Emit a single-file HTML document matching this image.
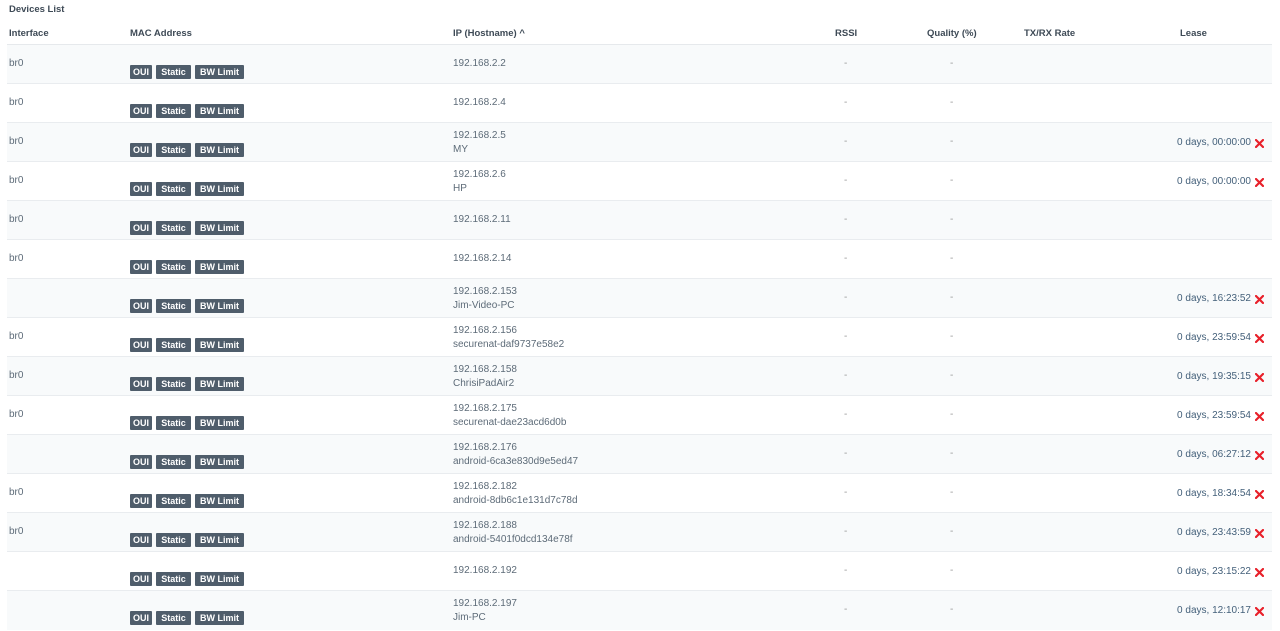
<!DOCTYPE html>
<html><head><meta charset="utf-8"><style>
*{margin:0;padding:0;box-sizing:border-box}
body{width:1280px;height:631px;background:#fff;font-family:"Liberation Sans",sans-serif;color:#5d6b78;font-size:10px;position:relative;overflow:hidden}
.t{position:absolute;left:9px;top:4px;font-size:9.5px;font-weight:bold;color:#3e4a56}
.h{position:absolute;top:24px;left:7px;width:1265px;height:21px;border-bottom:1px solid #e6e9ec;font-weight:bold;color:#3e4a56;font-size:9.5px}
.h span{position:absolute;top:4px}
.r{position:absolute;left:7px;width:1265px;height:39px;border-bottom:1px solid #e9ecef}
.r.o{background:#f8fafb}
.r .i{position:absolute;left:2px;top:13px}
.b{position:absolute;top:20px;height:14px;background:#4f5d6b;color:#fff;font-weight:bold;font-size:9px;line-height:14px;text-align:center;border-radius:1px}
.ip{position:absolute;left:446px;top:13px}
.ip2{position:absolute;left:446px;top:6px;line-height:14px}
.d1{position:absolute;left:837px;top:13px;color:#999}
.d2{position:absolute;left:943px;top:13px;color:#999}
.l{position:absolute;right:21px;top:14px;color:#44607a}
.x{position:absolute;right:8px;top:16px;width:9px;height:9px}
</style></head><body>
<svg width="0" height="0" style="position:absolute"><defs><symbol id="xx" viewBox="0 0 9 9"><path d="M1 1L8 8M8 1L1 8" stroke="#e8202a" stroke-width="2.2" stroke-linecap="round"/></symbol></defs></svg>
<div class="t">Devices List</div>
<div class="h"><span style="left:2px">Interface</span><span style="left:123px">MAC Address</span><span style="left:446px">IP (Hostname) ^</span><span style="left:828px">RSSI</span><span style="left:920px">Quality (%)</span><span style="left:1017px">TX/RX Rate</span><span style="left:1173px">Lease</span></div>

<div class="r o" style="top:45px"><span class="i">br0</span><span class="b" style="left:123px;width:22px">OUI</span><span class="b" style="left:149px;width:35px">Static</span><span class="b" style="left:188px;width:49px">BW Limit</span><span class="ip">192.168.2.2</span><span class="d1">-</span><span class="d2">-</span></div>
<div class="r" style="top:84px"><span class="i">br0</span><span class="b" style="left:123px;width:22px">OUI</span><span class="b" style="left:149px;width:35px">Static</span><span class="b" style="left:188px;width:49px">BW Limit</span><span class="ip">192.168.2.4</span><span class="d1">-</span><span class="d2">-</span></div>
<div class="r o" style="top:123px"><span class="i">br0</span><span class="b" style="left:123px;width:22px">OUI</span><span class="b" style="left:149px;width:35px">Static</span><span class="b" style="left:188px;width:49px">BW Limit</span><span class="ip2">192.168.2.5<br>MY</span><span class="d1">-</span><span class="d2">-</span><span class="l">0 days, 00:00:00</span><svg class="x"><use href="#xx"/></svg></div>
<div class="r" style="top:162px"><span class="i">br0</span><span class="b" style="left:123px;width:22px">OUI</span><span class="b" style="left:149px;width:35px">Static</span><span class="b" style="left:188px;width:49px">BW Limit</span><span class="ip2">192.168.2.6<br>HP</span><span class="d1">-</span><span class="d2">-</span><span class="l">0 days, 00:00:00</span><svg class="x"><use href="#xx"/></svg></div>
<div class="r o" style="top:201px"><span class="i">br0</span><span class="b" style="left:123px;width:22px">OUI</span><span class="b" style="left:149px;width:35px">Static</span><span class="b" style="left:188px;width:49px">BW Limit</span><span class="ip">192.168.2.11</span><span class="d1">-</span><span class="d2">-</span></div>
<div class="r" style="top:240px"><span class="i">br0</span><span class="b" style="left:123px;width:22px">OUI</span><span class="b" style="left:149px;width:35px">Static</span><span class="b" style="left:188px;width:49px">BW Limit</span><span class="ip">192.168.2.14</span><span class="d1">-</span><span class="d2">-</span></div>
<div class="r o" style="top:279px"><span class="b" style="left:123px;width:22px">OUI</span><span class="b" style="left:149px;width:35px">Static</span><span class="b" style="left:188px;width:49px">BW Limit</span><span class="ip2">192.168.2.153<br>Jim-Video-PC</span><span class="d1">-</span><span class="d2">-</span><span class="l">0 days, 16:23:52</span><svg class="x"><use href="#xx"/></svg></div>
<div class="r" style="top:318px"><span class="i">br0</span><span class="b" style="left:123px;width:22px">OUI</span><span class="b" style="left:149px;width:35px">Static</span><span class="b" style="left:188px;width:49px">BW Limit</span><span class="ip2">192.168.2.156<br>securenat-daf9737e58e2</span><span class="d1">-</span><span class="d2">-</span><span class="l">0 days, 23:59:54</span><svg class="x"><use href="#xx"/></svg></div>
<div class="r o" style="top:357px"><span class="i">br0</span><span class="b" style="left:123px;width:22px">OUI</span><span class="b" style="left:149px;width:35px">Static</span><span class="b" style="left:188px;width:49px">BW Limit</span><span class="ip2">192.168.2.158<br>ChrisiPadAir2</span><span class="d1">-</span><span class="d2">-</span><span class="l">0 days, 19:35:15</span><svg class="x"><use href="#xx"/></svg></div>
<div class="r" style="top:396px"><span class="i">br0</span><span class="b" style="left:123px;width:22px">OUI</span><span class="b" style="left:149px;width:35px">Static</span><span class="b" style="left:188px;width:49px">BW Limit</span><span class="ip2">192.168.2.175<br>securenat-dae23acd6d0b</span><span class="d1">-</span><span class="d2">-</span><span class="l">0 days, 23:59:54</span><svg class="x"><use href="#xx"/></svg></div>
<div class="r o" style="top:435px"><span class="b" style="left:123px;width:22px">OUI</span><span class="b" style="left:149px;width:35px">Static</span><span class="b" style="left:188px;width:49px">BW Limit</span><span class="ip2">192.168.2.176<br>android-6ca3e830d9e5ed47</span><span class="d1">-</span><span class="d2">-</span><span class="l">0 days, 06:27:12</span><svg class="x"><use href="#xx"/></svg></div>
<div class="r" style="top:474px"><span class="i">br0</span><span class="b" style="left:123px;width:22px">OUI</span><span class="b" style="left:149px;width:35px">Static</span><span class="b" style="left:188px;width:49px">BW Limit</span><span class="ip2">192.168.2.182<br>android-8db6c1e131d7c78d</span><span class="d1">-</span><span class="d2">-</span><span class="l">0 days, 18:34:54</span><svg class="x"><use href="#xx"/></svg></div>
<div class="r o" style="top:513px"><span class="i">br0</span><span class="b" style="left:123px;width:22px">OUI</span><span class="b" style="left:149px;width:35px">Static</span><span class="b" style="left:188px;width:49px">BW Limit</span><span class="ip2">192.168.2.188<br>android-5401f0dcd134e78f</span><span class="d1">-</span><span class="d2">-</span><span class="l">0 days, 23:43:59</span><svg class="x"><use href="#xx"/></svg></div>
<div class="r" style="top:552px"><span class="b" style="left:123px;width:22px">OUI</span><span class="b" style="left:149px;width:35px">Static</span><span class="b" style="left:188px;width:49px">BW Limit</span><span class="ip">192.168.2.192</span><span class="d1">-</span><span class="d2">-</span><span class="l">0 days, 23:15:22</span><svg class="x"><use href="#xx"/></svg></div>
<div class="r o" style="top:591px;border-bottom:none"><span class="b" style="left:123px;width:22px">OUI</span><span class="b" style="left:149px;width:35px">Static</span><span class="b" style="left:188px;width:49px">BW Limit</span><span class="ip2">192.168.2.197<br>Jim-PC</span><span class="d1">-</span><span class="d2">-</span><span class="l">0 days, 12:10:17</span><svg class="x"><use href="#xx"/></svg></div>
</body></html>
